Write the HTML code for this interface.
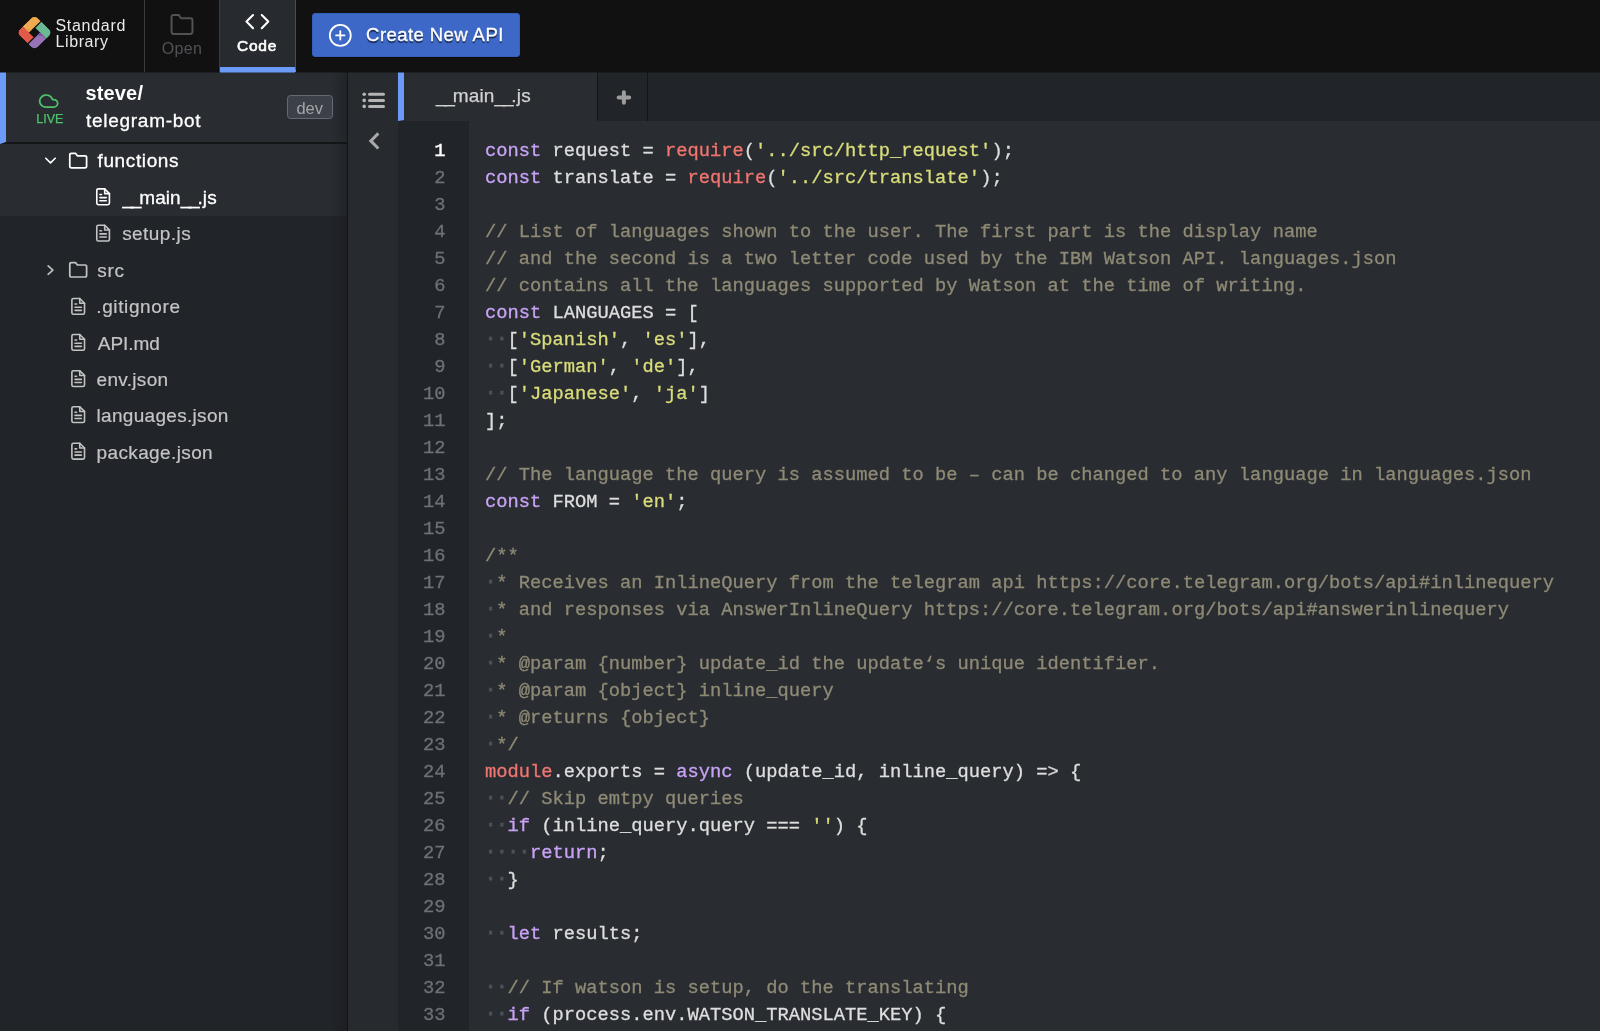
<!DOCTYPE html>
<html lang="en">
<head>
<meta charset="utf-8">
<title>Standard Library - Code</title>
<style>
*{box-sizing:border-box;margin:0;padding:0}
html,body{width:1600px;height:1031px;overflow:hidden;background:#292d32}
body{position:relative;font-family:"Liberation Sans",sans-serif;color:#fff;-webkit-font-smoothing:antialiased}
.abs{position:absolute}
#txt{position:absolute;left:0;top:0;width:1600px;height:1031px;will-change:transform}
.t{position:absolute;white-space:nowrap;line-height:1}
/* top bar */
#top{left:0;top:0;width:1600px;height:72px;background:#111111}
#codetab{left:220px;top:0;width:76px;height:72px;background:#272a2f;border-right:1px solid #4a4c50;border-bottom:5px solid #6b9bf6}
.vline{position:absolute;top:0;width:1px;height:72px;background:#3b3c3e}
#btn{left:312px;top:13px;width:208px;height:44px;background:#3d68c8;border-radius:3px;border:1px solid #3560bd;box-shadow:0 1px 0 rgba(0,0,0,.35)}
/* sidebar */
#side{left:0;top:72px;width:347px;height:959px;background:#212429}
#sideshadow{left:331px;top:72px;width:16px;height:959px;background:linear-gradient(90deg,rgba(18,19,21,0),rgba(18,19,21,.35))}
#sideborder{left:347px;top:72px;width:1px;height:959px;background:#131415}
#proj{left:0;top:72px;width:347px;height:72px;background:#292d32;border-left:6px solid #6b9bf6;border-bottom:2px solid #141517}
#selrows{left:0;top:144px;width:347px;height:72px;background:#292d32}
#badge{left:287px;top:95px;width:46px;height:24px;background:#3b4049;border:1px solid #656971;border-radius:3.5px}
.row{position:absolute;white-space:nowrap;line-height:1;font-size:19px;color:#c4c4c4;-webkit-text-stroke:.2px}
.u{letter-spacing:-2.2px}
.row.w{color:#fff;-webkit-text-stroke:.3px}
/* strip */
#strip{left:348px;top:72px;width:50px;height:959px;background:#272a2f}
/* editor */
#tabbar{left:398px;top:72px;width:1202px;height:49px;background:#212429}
#tab{left:398px;top:72px;width:200px;height:49px;background:#292d32;border-left:6px solid #6b9bf6;border-right:1px solid #131416;border-bottom:1px solid #292d32}
#plustab{left:598px;top:72px;width:50px;height:49px;background:#212429;border-right:1px solid #131416}
#gutter{left:398px;top:121px;width:71px;height:910px;background:#212429}
#codebg{left:469px;top:121px;width:1131px;height:910px;background:#292d32}
pre{position:absolute;font-family:"Liberation Mono",monospace;font-size:18.75px;line-height:27px;white-space:pre;-webkit-text-stroke:.3px}
#nums{left:398px;top:138px;width:47.5px;text-align:right;color:#6e7177}
#nums b{color:#fff;font-weight:normal;-webkit-text-stroke:.45px}
#code{left:485px;top:138px;color:#dedede}
.k{color:#c9a2f6}.r{color:#f27570}.s{color:#dadc7a}.c{color:#8f8a75}.d{color:#4d5159;-webkit-text-stroke:1.1px;position:relative;top:-1px}
</style>
</head>
<body>
<div id="top" class="abs"></div>
<div class="vline" style="left:144px"></div>
<div class="vline" style="left:219px"></div>
<div id="codetab" class="abs"></div>
<div id="btn" class="abs"></div>
<div class="abs" style="left:0;top:72px;width:1600px;height:1px;background:rgba(17,17,17,.5);z-index:5"></div>
<div class="abs" style="left:220px;top:72px;width:75px;height:1px;background:rgba(107,155,246,.55);z-index:6"></div>

<div id="side" class="abs"></div>
<div id="selrows" class="abs"></div>
<div id="proj" class="abs"></div>
<div id="sideshadow" class="abs"></div>
<div id="sideborder" class="abs"></div>
<div id="badge" class="abs"></div>
<div id="strip" class="abs"></div>

<div id="tabbar" class="abs"></div>
<div id="tab" class="abs"></div>
<div id="plustab" class="abs"></div>
<div id="gutter" class="abs"></div>
<div id="codebg" class="abs"></div>

<div id="txt">
<div class="t" id="t_std" style="left:55.4px;top:18px;font-size:16px;letter-spacing:0.72px;color:#e9e9e9">Standard</div>
<div class="t" id="t_lib" style="left:55.6px;top:33.5px;font-size:16px;letter-spacing:0.58px;color:#e9e9e9">Library</div>
<div class="t" id="t_open" style="left:161.8px;top:41px;font-size:16px;letter-spacing:0.36px;color:#505256">Open</div>
<div class="t" id="t_codetab" style="left:236.9px;top:38px;font-size:15.5px;color:#fff;letter-spacing:0.82px;-webkit-text-stroke:.6px">Code</div>
<div class="t" id="t_btn" style="left:366.1px;top:26px;font-size:18.5px;letter-spacing:0.43px;color:#fff;text-shadow:0 1.5px 1px rgba(0,0,0,.65);-webkit-text-stroke:.3px">Create New API</div>
<div class="t" id="t_live" style="-webkit-text-stroke:.25px;left:36.2px;top:113px;font-size:12.5px;letter-spacing:0.05px;color:#4fc36b">LIVE</div>
<div class="t" id="t_steve" style="left:85.4px;top:83px;font-size:20px;font-weight:bold;letter-spacing:0.17px;color:#fff">steve/</div>
<div class="t" id="t_tbot" style="-webkit-text-stroke:.3px;left:86.0px;top:111px;font-size:19px;letter-spacing:0.72px;color:#fff">telegram-bot</div>
<div class="t" id="t_dev" style="left:296.4px;top:100px;font-size:16.5px;color:#a3a5a8;letter-spacing:0.02px">dev</div>

<div class="row w" id="r_functions" style="left:97.5px;top:151px;letter-spacing:0.62px">functions</div>
<div class="row w" id="r_main" style="left:122.5px;top:188px;letter-spacing:0.08px"><span class="u">__</span>main<span class="u">__</span>.js</div>
<div class="row" id="r_setup" style="left:122.2px;top:224px;letter-spacing:0.43px">setup.js</div>
<div class="row" id="r_src" style="left:97.2px;top:261px;letter-spacing:0.69px">src</div>
<div class="row" id="r_git" style="left:96.3px;top:297px;letter-spacing:0.61px">.gitignore</div>
<div class="row" id="r_api" style="left:97.8px;top:334px;letter-spacing:-0.06px">API.md</div>
<div class="row" id="r_env" style="left:96.5px;top:370px;letter-spacing:0.33px">env.json</div>
<div class="row" id="r_lang" style="left:96.5px;top:406px;letter-spacing:0.31px">languages.json</div>
<div class="row" id="r_pkg" style="left:96.5px;top:443px;letter-spacing:0.38px">package.json</div>

<div class="t" id="t_tab" style="left:436.0px;top:86px;-webkit-text-stroke:.25px;font-size:19px;color:#d2d2d2;letter-spacing:0.17px"><span class="u">__</span>main<span class="u">__</span>.js</div>
</div>

<svg class="abs" id="icons" style="left:0;top:0" width="1600" height="1031" viewBox="0 0 1600 1031">
<g transform="translate(34.5 32.6) scale(1 .985) rotate(-45) translate(-12.7 -12.7)">
<clipPath id="lc"><rect x="0" y="0" width="25.4" height="25.4" rx="5.0" ry="5.0"/></clipPath>
<g clip-path="url(#lc)">
<rect x="0" y="0" width="8.7" height="15.399999999999999" fill="#e15a47"/>
<rect x="8.7" y="0" width="16.7" height="8.7" fill="#f1aa50"/>
<rect x="16.7" y="10.0" width="8.7" height="16.7" fill="#6bb992"/>
<rect x="0" y="16.7" width="16.7" height="8.7" fill="#9673b6"/>
<polygon points="8.7,8.7 8.7,3.1999999999999993 12.899999999999999,8.7" fill="#ea9a4b"/>
<polygon points="16.7,16.7 16.7,22.2 12.5,16.7" fill="#7c55a8"/>
</g></g>
<g transform="translate(169.46 11.96) scale(1.045 1.045)" fill="none" stroke="#505256" stroke-width="1.914" stroke-linecap="round" stroke-linejoin="round"><path d="M22 19a2 2 0 0 1-2 2H4a2 2 0 0 1-2-2V5a2 2 0 0 1 2-2h5l2 3h9a2 2 0 0 1 2 2z"/></g>
<g transform="translate(244.32 8.52) scale(1.09 1.09)" fill="none" stroke="#ffffff" stroke-width="1.927" stroke-linecap="round" stroke-linejoin="round"><polyline points="16 18 22 12 16 6"/><polyline points="8 6 2 12 8 18"/></g>
<g transform="translate(327.76 22.86) scale(1.045 1.045)" fill="none" stroke="#ffffff" stroke-width="1.722" stroke-linecap="round" stroke-linejoin="round"><circle cx="12" cy="12" r="10"/><line x1="12" y1="8" x2="12" y2="16"/><line x1="8" y1="12" x2="16" y2="12"/></g>
<g transform="translate(38.81 92.04) scale(0.82 0.755)" fill="none" stroke="#4fc36b" stroke-width="2.159" stroke-linecap="round" stroke-linejoin="round"><path d="M18 10h-1.26A8 8 0 1 0 9 20h9a5 5 0 0 0 0-10z"/></g>
<g transform="translate(68.12 151.00) scale(0.84 0.8)" fill="none" stroke="#ffffff" stroke-width="2.073" stroke-linecap="round" stroke-linejoin="round"><path d="M22 19a2 2 0 0 1-2 2H4a2 2 0 0 1-2-2V5a2 2 0 0 1 2-2h5l2 3h9a2 2 0 0 1 2 2z"/></g>
<g transform="translate(68.12 260.20) scale(0.84 0.8)" fill="none" stroke="#c2c2c2" stroke-width="2.073" stroke-linecap="round" stroke-linejoin="round"><path d="M22 19a2 2 0 0 1-2 2H4a2 2 0 0 1-2-2V5a2 2 0 0 1 2-2h5l2 3h9a2 2 0 0 1 2 2z"/></g>
<g transform="translate(93.62 187.32) scale(0.79 0.79)" fill="none" stroke="#ffffff" stroke-width="2.025" stroke-linecap="round" stroke-linejoin="round"><path d="M14 2H6a2 2 0 0 0-2 2v16a2 2 0 0 0 2 2h12a2 2 0 0 0 2-2V8z"/><polyline points="14 2 14 8 20 8"/><line x1="16" y1="13" x2="8" y2="13"/><line x1="16" y1="17" x2="8" y2="17"/><polyline points="10 9 9 9 8 9"/></g>
<g transform="translate(93.62 223.62) scale(0.79 0.79)" fill="none" stroke="#c2c2c2" stroke-width="2.025" stroke-linecap="round" stroke-linejoin="round"><path d="M14 2H6a2 2 0 0 0-2 2v16a2 2 0 0 0 2 2h12a2 2 0 0 0 2-2V8z"/><polyline points="14 2 14 8 20 8"/><line x1="16" y1="13" x2="8" y2="13"/><line x1="16" y1="17" x2="8" y2="17"/><polyline points="10 9 9 9 8 9"/></g>
<g transform="translate(68.72 296.92) scale(0.79 0.79)" fill="none" stroke="#c2c2c2" stroke-width="2.025" stroke-linecap="round" stroke-linejoin="round"><path d="M14 2H6a2 2 0 0 0-2 2v16a2 2 0 0 0 2 2h12a2 2 0 0 0 2-2V8z"/><polyline points="14 2 14 8 20 8"/><line x1="16" y1="13" x2="8" y2="13"/><line x1="16" y1="17" x2="8" y2="17"/><polyline points="10 9 9 9 8 9"/></g>
<g transform="translate(68.72 332.92) scale(0.79 0.79)" fill="none" stroke="#c2c2c2" stroke-width="2.025" stroke-linecap="round" stroke-linejoin="round"><path d="M14 2H6a2 2 0 0 0-2 2v16a2 2 0 0 0 2 2h12a2 2 0 0 0 2-2V8z"/><polyline points="14 2 14 8 20 8"/><line x1="16" y1="13" x2="8" y2="13"/><line x1="16" y1="17" x2="8" y2="17"/><polyline points="10 9 9 9 8 9"/></g>
<g transform="translate(68.72 369.12) scale(0.79 0.79)" fill="none" stroke="#c2c2c2" stroke-width="2.025" stroke-linecap="round" stroke-linejoin="round"><path d="M14 2H6a2 2 0 0 0-2 2v16a2 2 0 0 0 2 2h12a2 2 0 0 0 2-2V8z"/><polyline points="14 2 14 8 20 8"/><line x1="16" y1="13" x2="8" y2="13"/><line x1="16" y1="17" x2="8" y2="17"/><polyline points="10 9 9 9 8 9"/></g>
<g transform="translate(68.72 405.12) scale(0.79 0.79)" fill="none" stroke="#c2c2c2" stroke-width="2.025" stroke-linecap="round" stroke-linejoin="round"><path d="M14 2H6a2 2 0 0 0-2 2v16a2 2 0 0 0 2 2h12a2 2 0 0 0 2-2V8z"/><polyline points="14 2 14 8 20 8"/><line x1="16" y1="13" x2="8" y2="13"/><line x1="16" y1="17" x2="8" y2="17"/><polyline points="10 9 9 9 8 9"/></g>
<g transform="translate(68.72 441.72) scale(0.79 0.79)" fill="none" stroke="#c2c2c2" stroke-width="2.025" stroke-linecap="round" stroke-linejoin="round"><path d="M14 2H6a2 2 0 0 0-2 2v16a2 2 0 0 0 2 2h12a2 2 0 0 0 2-2V8z"/><polyline points="14 2 14 8 20 8"/><line x1="16" y1="13" x2="8" y2="13"/><line x1="16" y1="17" x2="8" y2="17"/><polyline points="10 9 9 9 8 9"/></g>
<polyline points="45.8,158.2 50.5,162.9 55.2,158.2" fill="none" stroke="#ffffff" stroke-width="1.6" stroke-linecap="round" stroke-linejoin="round"/>
<polyline points="48.1,265.9 52.9,270.1 48.1,274.3" fill="none" stroke="#c2c2c2" stroke-width="1.6" stroke-linecap="round" stroke-linejoin="round"/>
<circle cx="364.2" cy="94.3" r="1.8" fill="#b4b4b4"/><line x1="369.5" y1="94.3" x2="383.5" y2="94.3" stroke="#b4b4b4" stroke-width="3" stroke-linecap="round"/>
<circle cx="364.2" cy="100.4" r="1.8" fill="#b4b4b4"/><line x1="369.5" y1="100.4" x2="383.5" y2="100.4" stroke="#b4b4b4" stroke-width="3" stroke-linecap="round"/>
<circle cx="364.2" cy="106.4" r="1.8" fill="#b4b4b4"/><line x1="369.5" y1="106.4" x2="383.5" y2="106.4" stroke="#b4b4b4" stroke-width="3" stroke-linecap="round"/>
<polyline points="377.3,134.4 370.8,140.9 377.3,147.4" fill="none" stroke="#a9a9a9" stroke-width="3" stroke-linecap="square" stroke-linejoin="miter"/>
<path d="M623.9 92.2V102.8M618.6 97.5H629.2" fill="none" stroke="#9c9c9c" stroke-width="4" stroke-linecap="round"/>
</svg>

<div id="txt2" style="position:absolute;left:0;top:0;width:1600px;height:1031px;will-change:transform">
<pre id="nums"><b>1</b>
2
3
4
5
6
7
8
9
10
11
12
13
14
15
16
17
18
19
20
21
22
23
24
25
26
27
28
29
30
31
32
33</pre>
<pre id="code"><span class="k">const</span> request = <span class="r">require</span>(<span class="s">'../src/http_request'</span>);
<span class="k">const</span> translate = <span class="r">require</span>(<span class="s">'../src/translate'</span>);

<span class="c">// List of languages shown to the user. The first part is the display name</span>
<span class="c">// and the second is a two letter code used by the IBM Watson API. languages.json</span>
<span class="c">// contains all the languages supported by Watson at the time of writing.</span>
<span class="k">const</span> LANGUAGES = [
<span class="d">··</span>[<span class="s">'Spanish'</span>, <span class="s">'es'</span>],
<span class="d">··</span>[<span class="s">'German'</span>, <span class="s">'de'</span>],
<span class="d">··</span>[<span class="s">'Japanese'</span>, <span class="s">'ja'</span>]
];

<span class="c">// The language the query is assumed to be – can be changed to any language in languages.json</span>
<span class="k">const</span> FROM = <span class="s">'en'</span>;

<span class="c">/**</span>
<span class="d">·</span><span class="c">* Receives an InlineQuery from the telegram api https://core.telegram.org/bots/api#inlinequery</span>
<span class="d">·</span><span class="c">* and responses via AnswerInlineQuery https://core.telegram.org/bots/api#answerinlinequery</span>
<span class="d">·</span><span class="c">*</span>
<span class="d">·</span><span class="c">* @param {number} update_id the update‘s unique identifier.</span>
<span class="d">·</span><span class="c">* @param {object} inline_query</span>
<span class="d">·</span><span class="c">* @returns {object}</span>
<span class="d">·</span><span class="c">*/</span>
<span class="r">module</span>.exports = <span class="k">async</span> (update_id, inline_query) =&gt; {
<span class="d">··</span><span class="c">// Skip emtpy queries</span>
<span class="d">··</span><span class="k">if</span> (inline_query.query === <span class="s">''</span>) {
<span class="d">····</span><span class="k">return</span>;
<span class="d">··</span>}

<span class="d">··</span><span class="k">let</span> results;

<span class="d">··</span><span class="c">// If watson is setup, do the translating</span>
<span class="d">··</span><span class="k">if</span> (process.env.WATSON_TRANSLATE_KEY) {</pre>
</div>
</body>
</html>
